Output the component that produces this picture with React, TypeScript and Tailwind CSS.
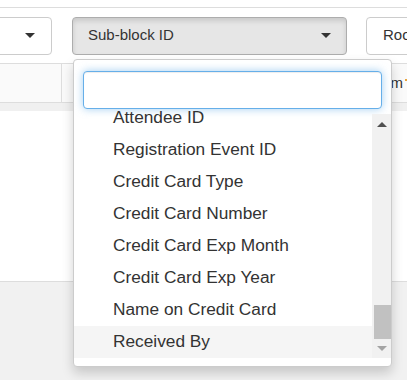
import React from 'react';

const items = [
  'Attendee ID',
  'Registration Event ID',
  'Credit Card Type',
  'Credit Card Number',
  'Credit Card Exp Month',
  'Credit Card Exp Year',
  'Name on Credit Card',
  'Received By',
];

const Caret: React.FC = () => (
  <span className="inline-block w-0 h-0 border-l-[5px] border-r-[5px] border-t-[5px] border-l-transparent border-r-transparent border-t-[#333]" />
);

const App: React.FC = () => {
  return (
    <div className="relative w-[407px] h-[380px] overflow-hidden bg-[#f1f1f1] font-['Liberation_Sans',Arial,sans-serif] text-[#333]">
      {/* page */}
      <div className="h-[8px] bg-white border-b border-[#dddddd]" />
      <div className="h-[55px] bg-white flex items-center">
        <div className="shrink-0 ml-[-100px] w-[152px] h-[38px] border border-[#cccccc] rounded-[4px] bg-white flex items-center justify-end pr-[16px]">
          <Caret />
        </div>
        <div className="shrink-0 ml-[20px] w-[275px] h-[38px] border border-[#adadad] rounded-[4px] bg-[#e6e6e6] shadow-[inset_0_3px_5px_rgba(0,0,0,0.125)] flex items-center justify-between pl-[15px] pr-[15px] text-[15px]">
          <span>Sub-block ID</span>
          <Caret />
        </div>
        <div className="shrink-0 ml-[19px] w-[100px] h-[38px] border border-[#cccccc] rounded-[4px] bg-white flex items-center pl-[16px] text-[15px]">
          <span>Room</span>
        </div>
      </div>
      <div className="h-[40px] bg-[#fafafa] border-t border-b border-[#dddddd] flex">
        <div className="shrink-0 w-[62px] border-r border-[#dddddd]" />
        <div className="flex-1 flex items-center justify-end text-[15px] overflow-hidden">
          <span className="shrink-0 mr-[2px]">Room</span>
          <span className="shrink-0 w-[3px] h-[2px] bg-[#e8a33d] mr-[-1px] mb-[6px]" />
        </div>
      </div>
      <div className="h-[8px] bg-[#f0f0f0]" />
      <div className="h-[171px] bg-white border-b border-[#dddddd]" />

      {/* dropdown */}
      <div className="absolute left-[73px] top-[59px] w-[319px] h-[308px] bg-white border border-[#cccccc] rounded-[4px] shadow-[0_6px_12px_rgba(0,0,0,0.175)] flex flex-col">
        <div className="px-[9px] pt-[11px] pb-[2px]">
          <div className="h-[38px] rounded-[4px] border border-[#66afe9] bg-white shadow-[inset_0_1px_1px_rgba(0,0,0,0.075),0_0_8px_rgba(102,175,233,0.6)]" />
        </div>
        <div className="flex h-[247px]">
          <div className="flex-1 overflow-hidden">
            <div className="mt-[-9px]">
              {items.map((it, i) => (
                <div
                  key={it}
                  className={`h-[32px] flex items-center pl-[39px] text-[17.3px] whitespace-nowrap ${
                    i === items.length - 1 ? 'bg-[#f5f5f5]' : ''
                  }`}
                >
                  {it}
                </div>
              ))}
            </div>
          </div>
          <div className="w-[19px] bg-[#f1f1f1] flex flex-col mt-[3px]">
            <div className="h-[20px] flex items-center justify-center">
              <span className="inline-block w-0 h-0 border-l-[5px] border-r-[5px] border-b-[5px] border-l-transparent border-r-transparent border-b-[#505050]" />
            </div>
            <div className="flex-1 flex flex-col justify-end pl-[2px]">
              <div className="h-[34px] bg-[#c1c1c1] mb-[-1px]" />
            </div>
            <div className="h-[20px] flex items-center justify-center">
              <span className="inline-block w-0 h-0 border-l-[5px] border-r-[5px] border-t-[5px] border-l-transparent border-r-transparent border-t-[#a3a3a3]" />
            </div>
          </div>
        </div>
      </div>
    </div>
  );
};

export default App;
